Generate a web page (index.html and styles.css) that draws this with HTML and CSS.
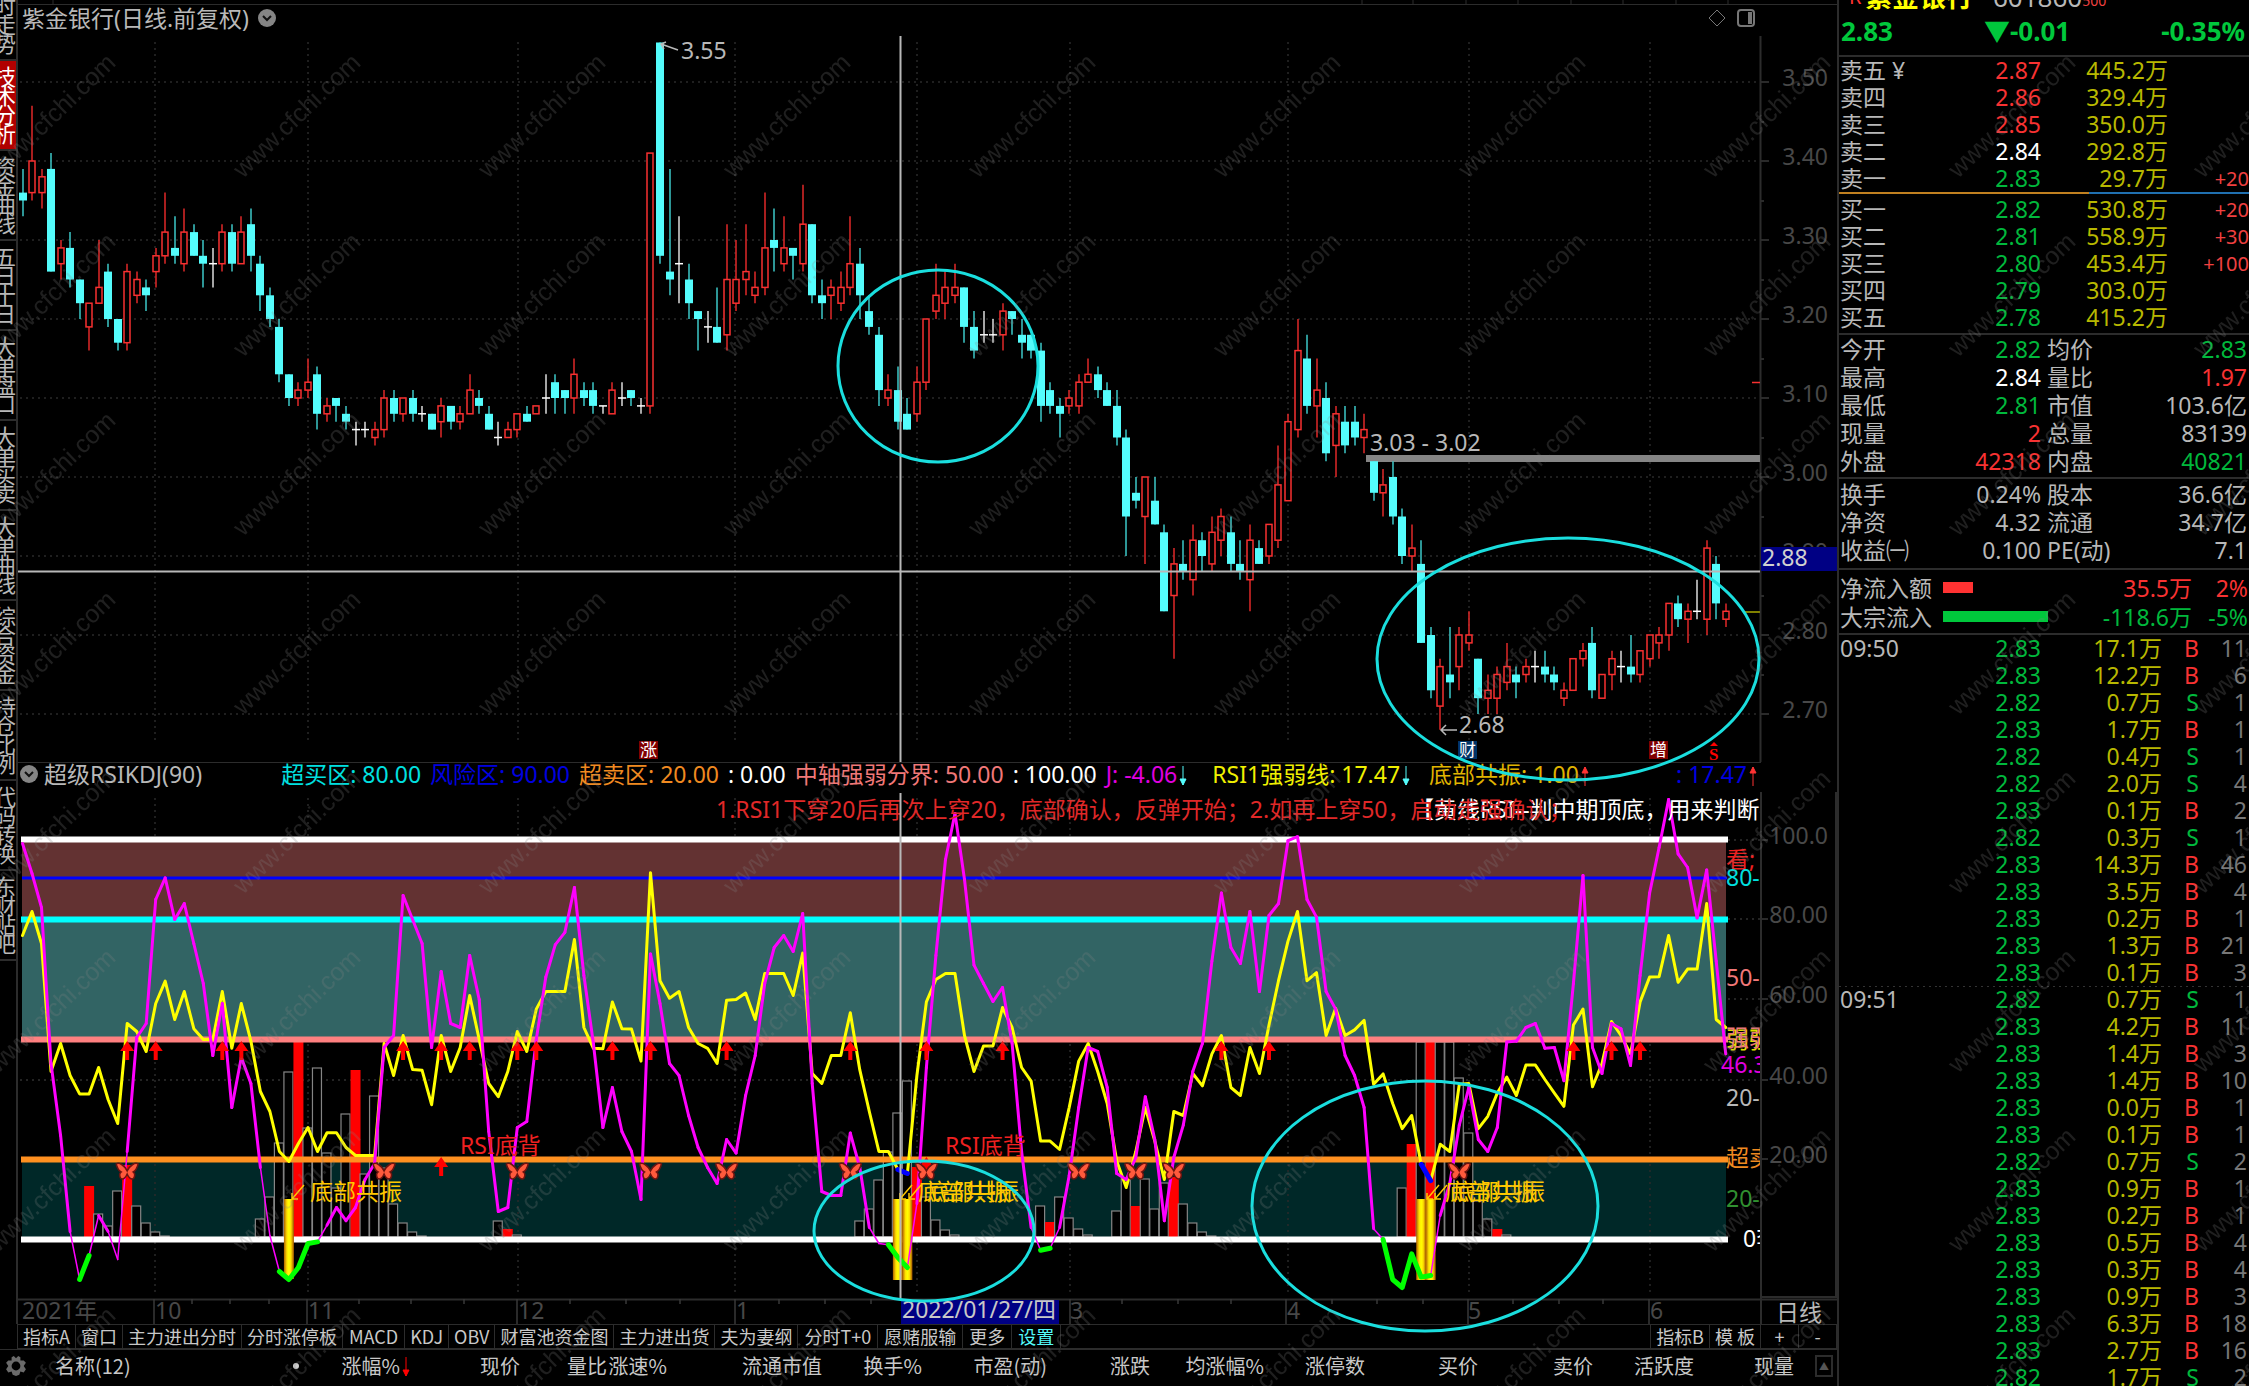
FILE: index.html
```html
<!DOCTYPE html>
<html lang="zh-CN">
<head>
<meta charset="utf-8">
<title>紫金银行 日线</title>
<link rel="stylesheet" href="styles.css">
</head>
<body>
<div class="app">
  <div class="left">
    <div class="workspace">
      <nav class="side" aria-label="视图">
        <button>分时走势</button><button class="active">技术分析</button><button>资金曲线</button><button>五日十日</button><button>大单盘口</button><button>大单买卖</button><button>大单曲线</button><button>综合资金</button><button>持仓比例</button><button>代码转换</button><button>东财贴吧</button>
      </nav>
      <main class="charts">
        <header class="price-head">
          <h1>紫金银行(日线.前复权)</h1>
          <svg class="chev" viewBox="0 0 18 18"><circle cx="9" cy="9" r="9"/><path d="M5 7l4 4 4-4"/></svg>
          <span class="spacer"></span>
          <svg class="tool" viewBox="0 0 18 18"><path d="M9 1l8 8-8 8-8-8z"/></svg>
          <svg class="tool" viewBox="0 0 18 18"><rect x="1" y="1" width="16" height="16" rx="3"/><path class="fill" d="M11 3h4v12h-4z"/></svg>
        </header>
        <svg id="price" class="plot" viewBox="18 36 1819 726"></svg>
        <header class="ind-head">
          <svg class="chev" viewBox="0 0 18 18"><circle cx="9" cy="9" r="9"/><path d="M5 7l4 4 4-4"/></svg>
          <h2>超级RSIKDJ(90)</h2>
          <span class="c-cyan">超买区: 80.00</span>
          <span class="c-blue">风险区: 90.00</span>
          <span class="c-orange">超卖区: 20.00</span>
          <span class="c-white">: 0.00</span>
          <span class="c-pink">中轴强弱分界: 50.00</span>
          <span class="c-white">: 100.00</span>
          <span class="c-mag">J: -4.06<svg class="arr down" viewBox="0 0 8 20"><path d="M4 0v19M1 13l3 6 3-6z"/></svg></span>
          <span class="c-yellow">RSI1强弱线: 17.47<svg class="arr down" viewBox="0 0 8 20"><path d="M4 0v19M1 13l3 6 3-6z"/></svg></span>
          <span class="c-gold">底部共振: 1.00<svg class="arr up" viewBox="0 0 8 20"><path d="M4 20V1M1 7l3-6 3 6z"/></svg></span>
          <span class="c-blue last">: 17.47<svg class="arr up" viewBox="0 0 8 20"><path d="M4 20V1M1 7l3-6 3 6z"/></svg></span>
        </header>
        <svg id="ind" class="plot" viewBox="18 792 1819 532"></svg>
      </main>
    </div>
    <nav class="tabs" aria-label="指标">
      <button>指标A</button><button>窗口</button><button>主力进出分时</button><button>分时涨停板</button><button class="wide">MACD</button><button>KDJ</button><button>OBV</button><button>财富池资金图</button><button>主力进出货</button><button>夫为妻纲</button><button class="wide">分时T+0</button><button class="wide">愿赌服输</button><button class="wide">更多</button><button class="wide on">设置</button>
      <span class="spacer"></span>
      <button class="first">指标B</button><button>模 板</button><button class="sq">+</button><button class="sq">-</button>
    </nav>
    <div class="cols">
      <svg class="gear" viewBox="0 0 20 20"><path d="M10 3l2-2 2 1 0 3 3 0 2 2-2 3 2 3-2 3-3-1-1 3-3 1-3-1-1-3-3 1-2-3 2-3-2-3 2-2 3 0 0-3 2-1z"/><circle cx="10" cy="10" r="4"/></svg>
      <span class="name">名称(12)<i></i></span><span>涨幅%<svg class="arr sort" viewBox="0 0 8 20"><path d="M4 0v19M1 13l3 6 3-6z"/></svg></span><span>现价</span><span>量比</span><span>涨速%</span><span>流通市值</span><span>换手%</span><span>市盈(动)</span><span>涨跌</span><span>均涨幅%</span><span>涨停数</span><span>买价</span><span>卖价</span><span>活跃度</span><span>现量</span><button aria-label="向上">▲</button>
    </div>
    <svg class="notes" viewBox="0 0 1837 1386">
      <g class="ring"><ellipse cx="938" cy="366" rx="100" ry="96"/><ellipse cx="1568" cy="659" rx="191" ry="121"/><ellipse cx="924" cy="1231" rx="110" ry="70"/><ellipse cx="1425" cy="1206" rx="173" ry="125"/></g>
      <path class="rule" d="M1362 0v4M1413 0v4M1466 0v4M1518 0v4M1571 0v4M1623 0v4M1676 0v4M1728 0v4M53 0v4"/>
    </svg>
  </div>
  <aside class="quote">
    <div class="title"><span class="r">R</span><b>紫金银行</b><span>601860</span><small>500</small></div>
    <div class="last-price"><span>2.83</span><span>▼-0.01</span><span>-0.35%</span></div>
    <table class="book sell"><tbody>
      <tr><th>卖五<em>¥</em></th><td class="up">2.87</td><td class="vol">445.2万</td><td></td></tr>
      <tr><th>卖四</th><td class="up">2.86</td><td class="vol">329.4万</td><td></td></tr>
      <tr><th>卖三</th><td class="up">2.85</td><td class="vol">350.0万</td><td></td></tr>
      <tr><th>卖二</th><td class="flat">2.84</td><td class="vol">292.8万</td><td></td></tr>
      <tr><th>卖一</th><td class="dn">2.83</td><td class="vol">29.7万</td><td class="chg">+20</td></tr>
    </tbody></table>
    <table class="book buy"><tbody>
      <tr><th>买一</th><td class="dn">2.82</td><td class="vol">530.8万</td><td class="chg">+20</td></tr>
      <tr><th>买二</th><td class="dn">2.81</td><td class="vol">558.9万</td><td class="chg">+30</td></tr>
      <tr><th>买三</th><td class="dn">2.80</td><td class="vol">453.4万</td><td class="chg">+100</td></tr>
      <tr><th>买四</th><td class="dn">2.79</td><td class="vol">303.0万</td><td></td></tr>
      <tr><th>买五</th><td class="dn">2.78</td><td class="vol">415.2万</td><td></td></tr>
    </tbody></table>
    <table class="stats"><tbody>
      <tr><th>今开</th><td class="dn">2.82</td><th>均价</th><td class="dn">2.83</td></tr>
      <tr><th>最高</th><td class="flat">2.84</td><th>量比</th><td class="up">1.97</td></tr>
      <tr><th>最低</th><td class="dn">2.81</td><th>市值</th><td>103.6亿</td></tr>
      <tr><th>现量</th><td class="up">2</td><th>总量</th><td>83139</td></tr>
      <tr><th>外盘</th><td class="up">42318</td><th>内盘</th><td class="dn">40821</td></tr>
    </tbody></table>
    <table class="stats base"><tbody>
      <tr><th>换手</th><td>0.24%</td><th>股本</th><td>36.6亿</td></tr>
      <tr><th>净资</th><td>4.32</td><th>流通</th><td>34.7亿</td></tr>
      <tr><th>收益㈠</th><td>0.100</td><th>PE(动)</th><td>7.1</td></tr>
    </tbody></table>
    <div class="flow">
      <div class="up"><span class="k">净流入额</span><span class="bar in"></span><span class="amt">35.5万</span><span class="pct">2%</span></div>
      <div class="dn"><span class="k">大宗流入</span><span class="bar out"></span><span class="amt">-118.6万</span><span class="pct">-5%</span></div>
    </div>
    <table class="ticks"><tbody id="ticks"></tbody></table>
  </aside>
  <svg class="mark"><defs><pattern id="wm" x="221" y="23" width="245" height="179" patternUnits="userSpaceOnUse"><text x="22" y="156" transform="rotate(-44 22 156)">www.cfchi.com</text></pattern></defs><rect width="100%" height="100%" fill="url(#wm)"/></svg>
</div>
<script src="chart.js"></script>
</body>
</html>
```

FILE: styles.css
```css
* { box-sizing: border-box; }
body { margin: 0; background: #000; color: #b8b8b8; font: 23px/28px "Noto Sans", "Noto Sans CJK SC", sans-serif; }
button { font: inherit; color: inherit; background: none; border: 0; margin: 0; padding: 0; white-space: nowrap; }
h1, h2 { font: inherit; margin: 0; }
.spacer { flex: 1; }

.app { display: flex; height: 100vh; overflow: hidden; position: relative; }
.left { flex: 1; min-width: 0; position: relative; }
.workspace { display: flex; align-items: flex-start; }

.side { width: 18px; flex: none; align-self: stretch; border-right: 2px solid #2c2c2c; overflow: hidden; margin-top: -29px; }
.side button { display: block; width: 16px; height: 90px; padding: 6px 0; border-bottom: 2px solid #2c2c2c; white-space: normal; overflow: hidden; font-size: 22px; line-height: 19px; word-break: break-all; direction: rtl; }
.side .active { background: #b00000; color: #fff; }

.charts { flex: 1; min-width: 0; }
.plot { display: block; width: 100%; height: auto; overflow: hidden; }
.price-head { display: flex; align-items: center; gap: 9px; height: 32px; margin-top: 4px; padding: 0 82px 5px 4px; border-top: 1px solid #2c2c2c; }
.chev { width: 18px; height: 18px; flex: none; }
.chev circle { fill: #858585; }
.chev path { fill: none; stroke: #111; stroke-width: 2; }
.tool { width: 18px; height: 18px; fill: none; stroke: #777; stroke-width: 1; margin-left: 2px; }
.tool rect { stroke-width: 2; }
.tool .fill { fill: #777; stroke: none; }

.ind-head { display: flex; align-items: center; height: 30px; padding: 0 0 8px 2px; gap: 9px; border-top: 1px solid #2c2c2c; white-space: nowrap; overflow: hidden; margin-right: 76px; }
.ind-head h2 { margin: 0 70px 0 -3px; }
.ind-head span { flex: none; }
.ind-head .last { margin-left: auto; margin-right: 4px; }
.ind-head .c-yellow { margin-left: 16px; }
.ind-head .c-gold { margin-left: 10px; }
.arr { width: 8px; height: 20px; vertical-align: -3px; margin-left: 2px; stroke: currentColor; fill: currentColor; stroke-width: 1; }
.down { color: #54fcfc; }
.up.arr { color: #ff3232; }
.c-cyan { color: #00e0e0; }
.c-blue { color: #0000e0; }
.c-orange { color: #f08a20; }
.c-white { color: #fff; }
.c-pink { color: #f07878; }
.c-mag { color: #e000e0; }
.c-yellow { color: #f0f000; }
.c-gold { color: #e0b400; }

.tabs { display: flex; height: 25px; margin-left: 17px; border: solid #2c2c2c; border-width: 1px 0 1px 1px; font-size: 18px; line-height: 20px; color: #c8c8c8; font-family: "Noto Sans CJK SC", sans-serif; }
.tabs button { padding: 0 5px 2px; border-right: 1px solid #2c2c2c; }
.tabs .wide { padding: 0 6px 2px; }
.tabs .on { color: #54fcfc; }
.tabs .first { border-left: 1px solid #2c2c2c; }
.tabs .sq { width: 38px; }

.cols { display: grid; grid-template-columns: 35fr 265fr 110fr 110fr 87fr 60fr 155fr 100fr 125fr 103fr 114fr 101fr 113fr 115fr 101fr 100fr 43fr; align-items: center; height: 32px; border-top: 1px solid #2c2c2c; font: 20px/30px "Noto Sans CJK SC", sans-serif; color: #c8c8c8; text-align: right; white-space: nowrap; }
.cols .name { display: flex; align-items: center; justify-content: space-between; padding: 0 1px 0 20px; }
.cols i { width: 6px; height: 6px; border-radius: 3px; background: #ccc; }
.cols button { width: 18px; height: 22px; margin-left: 21px; border: 2px solid #2c2c2c; font-size: 10px; line-height: 16px; color: #555; }
.gear { width: 22px; height: 22px; margin-left: 5px; fill: #6a6a6a; }
.gear circle { fill: #000; }
.sort { color: #f00; }

.notes { position: absolute; left: 0; top: 0; width: 100%; height: auto; pointer-events: none; overflow: hidden; }
.ring { fill: none; stroke: #1adede; stroke-width: 3; }
.rule { stroke: #2c2c2c; stroke-width: 1; }

.quote { width: 412px; flex: none; border-left: 2px solid #2c2c2c; overflow: hidden; }
.title { display: flex; align-items: flex-end; height: 12px; padding-left: 10px; font-size: 26px; line-height: 30px; white-space: nowrap; }
.title .r { color: #ff3232; width: 16px; overflow: hidden; font-size: 20px; }
.title b { color: #ff0; margin-right: 20px; font-size: 27px; }
.title small { color: #f04040; font-size: 14px; line-height: 22px; }
.last-price { display: flex; justify-content: space-between; height: 45px; padding: 1px 4px 0 2px; font-weight: 700; font-size: 26px; line-height: 36px; color: #00c83c; border-bottom: 2px solid #2c2c2c; }
table { width: 100%; border-collapse: separate; border-spacing: 0; table-layout: fixed; }
th { font-weight: 400; text-align: left; padding: 0 0 0 1px; white-space: nowrap; }
td { text-align: right; padding: 0; white-space: nowrap; }
.up { color: #f83232; }
.dn { color: #00b83c; }
.flat { color: #fff; }
.vol { color: #b8b800; }
em { font-style: normal; margin-left: 6px; }
.book tr, .ticks tr { height: 27px; line-height: 27px; }
.book th { width: 120px; }
.book td:nth-child(2) { width: 82px; }
.book td:nth-child(3) { width: 127px; }
.book .chg { font-size: 20px; color: #f04040; }
.sell { border-bottom: 2px solid; border-image: linear-gradient(90deg, #c08020 61%, #2070b0 61%) 1; }
.buy { padding: 2px 0; border-bottom: 2px solid #2c2c2c; }
.stats { border-bottom: 2px solid #2c2c2c; padding: 0 2px 2px 0; }
.stats.base { padding: 1px 2px 4px 0; }
.stats tr { height: 28px; line-height: 28px; }
.stats th:first-child { width: 100px; }
.stats td:nth-child(2) { width: 102px; }
.stats th:nth-child(3) { width: 88px; padding-left: 6px; }
.flow { border-bottom: 2px solid #2c2c2c; padding: 3px 0 2px; }
.flow div { display: flex; align-items: center; height: 29px; }
.k { color: #b8b8b8; width: 100px; padding-left: 1px; margin-right: 4px; white-space: nowrap; flex: none; }
.bar { height: 11px; }
.in { width: 30px; background: #ff3232; }
.out { width: 105px; background: #00c83c; }
.amt { margin-left: auto; }
.pct { width: 57px; text-align: right; padding-right: 1px; }
.ticks th { width: 100px; padding-left: 1px; }
.ticks td:nth-child(2) { width: 102px; }
.ticks td:nth-child(3) { width: 121px; }
.ticks td:nth-child(4) { width: 37px; }
.ticks td:nth-child(5) { color: #777; padding-right: 2px; }
.ticks .minute > * { background: repeating-linear-gradient(90deg, #333 0 2px, transparent 2px 6px) top / 100% 1px no-repeat; }

.mark { position: absolute; inset: 0; width: 100%; height: 100%; pointer-events: none; }
.mark text { font: 25px "Liberation Sans", sans-serif; fill: #808080; fill-opacity: .24; }

.plot text { font: 23px "Noto Sans", "Noto Sans CJK SC", sans-serif; fill: #b8b8b8; white-space: pre; }
.plot .axis { fill: #484848; }
.plot .end { text-anchor: end; }
.plot .gold { fill: #ffc800; }
.plot .red { fill: #f02020; }
.plot .badge { font-size: 17px; fill: #fff; }
```

FILE: chart.js
```javascript
const X0 = 22.5, STEP = 9.515;
const x = i => X0 + STEP * i;
const el = id => document.getElementById(id);
const line = (x1, y1, x2, y2, c, w = 1, extra = '') => `<path d="M${x1} ${y1}L${x2} ${y2}" fill="none" stroke="${c}" stroke-width="${w}" ${extra}/>`;
const rect = (a, b, w, h, f, extra = '') => `<rect x="${a}" y="${b}" width="${w}" height="${h}" fill="${f}" ${extra}/>`;
const text = (a, b, s, cls = '', fill = '') => `<text x="${a}" y="${b}" class="${cls}" ${fill ? `style="fill:${fill}"` : ''}>${s}</text>`;
const DOT = 'stroke-dasharray="2 4"';
const months = [155, 308, 518, 735, 917, 1070, 1288, 1469, 1650];

// One candle per day: type (c falling, r rising, w unchanged), then high, body top, body bottom, low in cents below 3.50.
const candles = `c11 14 15 17,r3 10 14 15,r11 12 14 16,c9 11 24 24,r20 21 23 25,c19 21 25 26,c25 25 28 30,r28 28 31 34,r20 26 28 28,c23 24 30 31,c30 30 33 34,r23 24 33 34,r24 25 27 28,c25 26 27 29,r21 22 24 26,r14 19 22 23,c17 21 22 23,r16 19 23 24,c18 19 22 22,c20 22 23 26,w21 23 23 26,r18 19 23 24,c18 19 23 24,r17 19 23 23,c16 18 22 24,c22 23 27 29,c26 27 30 31,c30 31 37 38,c37 37 40 41,r38 39 40 41,r35 38 39 40,c36 37 42 44,r40 41 42 43,c40 40 41 43,c41 42 43 44,w43 44 44 46,w43 44 44 45,r43 44 45 46,r39 40 44 45,c39 40 42 43,r40 40 42 43,c39 40 42 43,w41 42 42 43,c42 42 44 44,r40 41 43 45,c41 41 43 44,r41 42 43 44,r37 39 42 42,c39 40 41 42,c41 42 44 44,w43 45 45 46,r43 44 45 45,r42 42 44 45,c41 42 43 43,r41 41 42 42,w37 40 40 42,c37 38 40 42,c39 39 40 42,r35 37 40 42,c38 39 40 41,c38 39 41 42,w41 41 41 42,r38 39 42 42,w38 40 40 41,c39 39 40 41,w40 41 41 42,r9 9 41 42,c-5 -5 22 23,c11 24 25 27,w17 23 23 28,c23 25 28 30,c29 29 30 34,w29 31 31 33,c26 31 33 33,r18 25 32 34,r20 25 28 29,r18 24 25 27,r24 26 27 28,r14 21 26 27,c16 20 21 24,r17 21 23 24,c21 21 22 25,r13 18 23 24,c18 18 27 28,c25 27 28 30,r25 26 27 30,r24 26 28 29,r17 23 26 27,c21 23 27 30,c27 29 31 32,c31 32 39 41,r37 39 40 41,c36 39 43 44,c40 42 44 44,r36 38 42 43,r30 30 38 39,r23 27 29 30,r24 26 28 30,r23 26 27 28,c26 26 31 33,c29 31 34 35,w29 32 32 33,w30 32 32 33,r28 29 32 34,c29 29 30 32,c30 32 33 35,c32 32 34 35,c33 34 41 43,c38 39 41 42,c40 41 42 45,r39 40 41 42,r37 38 41 42,r35 37 38 38,c36 37 39 40,c38 39 41 41,c39 41 45 46,c44 45 55 60,c50 52 53 54,r50 50 55 61,c50 53 56 56,c56 57 67 67,r59 61 65 73,c58 61 62 63,r56 58 63 65,c57 58 60 62,r55 57 61 62,r54 55 58 60,c55 57 61 62,c58 61 62 63,r56 58 63 67,c58 59 61 61,r56 56 60 61,r46 51 58 59,r42 43 53 53,r30 34 44 45,c32 35 41 42,r35 39 41 45,c38 40 47 48,r41 42 46 50,c41 43 46 47,c41 43 45 46,r42 44 45 47,c48 48 52 53,r49 51 52 55,c48 50 55 56,c54 55 60 61,r56 59 60 62,c58 61 71 71,c69 70 77 78,r73 74 79 82,c69 75 76 78,r69 70 74 77,r67 70 71 72,c73 73 78 80,r75 77 78 80,r74 75 78 80,r71 74 76 77,c74 75 76 78,r73 74 75 76,w72 74 74 76,c72 74 75 76,c74 75 76 77,r76 77 78 79,r73 73 77 77,r71 72 73 74,c69 71 77 78,r75 75 78 78,r72 73 75 77,w72 74 74 76,c70 74 75 76,r72 72 75 76,r70 70 73 74,r69 70 71 73,r66 66 70 72,c65 66 68 69,r66 67 68 71,w63 67 67 68,r58 59 68 70,c60 61 66 68,r66 67 68 69`.split(',');
const py = n => 82 + n * 7.9;

let s = '';
for (let k = 0; k < 9; k++) {
  const y = Math.round(py(k * 10));
  s += line(20, y, 1760, y, '#2a2a2a', 1.5, DOT) + line(1760, y, 1769, y, '#383838', 1.5);
  if (k < 8) s += line(1760, y + 40, 1764, y + 40, '#383838', 1.5);
  s += text(1828, y + 4, (3.5 - k / 10).toFixed(2), 'axis end');
}
months.forEach(m => s += line(m, 42, m, 740, '#2a2a2a', 1.5, DOT));
s += line(1760.5, 36, 1760.5, 762, '#2c2c2c', 2);
s += rect(1366, 455, 394, 7, '#858585') + text(1370, 451, '3.03 - 3.02');
candles.forEach((c, i) => {
  const [h, t, b, l] = c.slice(1).split(' ').map(v => py(+v));
  const cx = Math.round(x(i)), type = c[0];
  if (type === 'c') s += line(cx, h, cx, l, '#3cc8c8', 1.5) + rect(cx - 4, t, 8, Math.max(b - t, 7), '#54fcfc');
  else if (type === 'r') s += line(cx, h, cx, t, '#e02828', 1.5) + line(cx, b, cx, l, '#e02828', 1.5) + rect(cx - 3, t, 6, b - t, '#000', 'stroke="#f83030" stroke-width="1.5"');
  else s += line(cx, h, cx, l, '#ddd', 1.5) + line(cx - 4, t, cx + 4, t, '#fff', 1.5);
});
s += line(900.5, 36, 900.5, 762, '#b8b8b8', 2) + line(18, 571.5, 1760, 571.5, '#b8b8b8', 2);
s += text(681, 59, '3.55') + '<path d="M678 50L661 44M666 42l-5 2 3 5" fill="none" stroke="#b8b8b8" stroke-width="1.5"/>';
s += text(1459, 733, '2.68') + '<path d="M1457 730h-16M1446 725l-5 5 5 5" fill="none" stroke="#b8b8b8" stroke-width="1.5"/>';
s += line(1752, 382.5, 1760, 382.5, '#f83030', 1.5) + line(1743, 612, 1760, 612, '#808000', 2);
s += rect(1761, 547, 76, 24, '#000084') + text(1762, 566, '2.88', '', '#d0d0d0');
[[639, '#800000', '涨'], [1458, '#003366', '财'], [1649, '#800000', '增']].forEach(([a, f, t]) => s += rect(a, 741, 19, 18, f) + text(a + 1, 756, t, 'badge'));
s += `<path d="M1710 746l4-4 4 4z" fill="red"/><text x="1709" y="760" style="font:700 17px 'Liberation Serif',serif;fill:red">S</text>`;
el('price').innerHTML = s;

const vy = v => 1239.5 - 4 * v;
const J = [99,91.5,83,44,26,2,-10,-4,6,2,-5,22,50.5,54,85,90.4,80,84,74,64,46,59,33,45.5,39,18,1,-8,-10,-7,-1,-.6,3.6,8,4.7,8,15,19,48,51,86,80,74,48,67,54,53,71,60,27,7,8,28,29.5,50,65.6,73.7,76.8,88,66,49,28,38,27,22,10,71.4,59,44,41,31,23,18,14,25,21.6,36,46,64,73,76,72,81.5,39,12,11,11,26.6,18,3,-1,-1.3,-4.5,-7,9,43,71,95,106.5,90,68.6,64,59.5,63,49,22,3,-2.7,-2.2,3,16,33,48,47,38,16.5,15,20.5,35.7,25,4.7,20.5,28.6,42,49,69.6,86.6,73,69,82,62,81,84,99.7,100.7,85,80.6,62,57.6,46,41,33,2.7,0,-10,-12,-3.6,-9.4,-9,6,14,28.6,38,25,22,28,49.4,49.6,53,54,47.8,48,39.7,64,91,48,41.5,54,52.7,43.5,66,86.6,98,110,96.4,93,80.4,92.4,69.6,46.4];
const R = [76,82,74,42,49,41,36.4,36.4,43,35,29,54,52,47,59,64.6,55,62,52.7,50,50,62,47.8,59,49.6,37,32,22,19.5,24,28,22,26.7,26.7,23,21,21,21,49,41,51,42.5,42.3,33.7,51,42,48,61,50,39,35.7,42,52,47,57.6,62,62,62,75,53,47.8,47.7,59.4,52.7,52.6,44.6,91.7,64.7,60.3,62,53,49,47.8,44,59.8,60,61.6,55,66.5,66.5,66.5,61,71.6,41.5,39,46,46,56.7,42.4,32,22,22,17.5,16.5,41,59.4,65,66.5,66.5,51,42,48.4,48.4,58,53,43,39.6,24.6,24.6,22.5,33,44.6,49,42,34,19.6,13,22,33,24.6,15,32,31,41.5,38.4,46.4,51,38,36,48,41.5,53.6,64.7,74.6,82,64.7,66.7,51,57.8,51,52.4,54.8,38.8,41.4,34,27.7,31,18.8,14.7,23.8,22,38.8,39,27.7,30.8,36.6,40.6,36,43.6,43.6,40,36.6,33.3,53.6,57.6,38.2,44,54.5,51,46.4,59.4,65.6,65.7,76,64.3,67.6,67.6,84,55,53];
// Histogram above the zero line: index, height, 'r' when the bar is filled red.
const bars = '7 51r,8 23,9 11,10 46,11 72r,12 31,13 14,14 5,15 1,25 18,26 40,27 94,28 165,29 195r,30 109,31 169,32 84,33 49,34 123,35 167r,36 63,37 141,38 69,39 33,40 14,41 5,42 1,50 16,51 8r,52 2,88 16,89 28,90 57,91 85,92 124,93 156,94 70r,95 40,96 17,97 7,98 2,107 31,108 15r,109 40,110 19,111 8,112 2,115 26,116 58,117 31r,118 58,119 28,120 54,121 60r,122 33,123 14,124 5,125 1,145 49,146 93r,147 195,148 195r,149 195,150 195,151 159,152 104,153 36,154 18,155 8r,156 2'.split(',');

s = '<defs><clipPath id="c"><path d="M18 792h1742v532h-1742z"/></clipPath><linearGradient id="g"><stop offset="0" stop-color="#b06000"/><stop offset=".3" stop-color="#ffe000"/><stop offset=".5" stop-color="#ff0"/><stop offset=".7" stop-color="#ffe000"/><stop offset="1" stop-color="#a05000"/></linearGradient></defs>';
s += rect(22, 840, 1704, 79, '#633232') + rect(22, 919, 1704, 120, '#326464') + rect(22, 1159, 1704, 81, '#002828');
months.forEach(m => s += line(m, 798, m, 838, '#2a2a2a', 1.5, DOT) + line(m, 1044, m, 1296, '#2a2a2a', 1.5, DOT));
[840, 919, 999, 1080, 1159].forEach((y, k) => s += line(y === 1080 ? 20 : 1728, y, 1762, y, '#303030', 1.5, DOT) + text(1828, y + 4, ['100.0', '80.00', '60.00', '40.00', '20.00'][k], 'axis end') + line(1762, y, 1768, y, '#383838', 1.5));
s += '<g clip-path="url(#c)">';
bars.forEach(b => {
  const red = b.endsWith('r'), [i, h] = b.replace('r', '').split(' ').map(Number);
  s += red ? rect(x(i) - 5, 1237 - h, 10, h, '#f00') : rect(x(i) - 5, 1237 - h, 9, h, '#000', 'stroke="#858585" stroke-width="1.2"');
});
const H = (v, c, w) => line(21, vy(v), 1728, vy(v), c, w);
s += H(100, '#fff', 6) + line(22, 878, 1727, 878, '#00f', 3) + H(80, '#0ff', 6) + H(50, '#ff8080', 6) + H(20, '#ff9020', 6) + H(0, '#fff', 6);
[28, 92, 93, 147, 148].forEach(i => s += rect(x(i) - 5, 1199, 10, i === 28 ? 80 : 81, 'url(#g)'));
const poly = (arr, a, b, c, w) => `<polyline fill="none" stroke="${c}" stroke-width="${w}" stroke-linejoin="round" stroke-linecap="round" points="${arr.slice(a, b + 1).map((v, k) => x(a + k).toFixed(1) + ',' + vy(v).toFixed(1)).join(' ')}"/>`;
s += poly(R, 0, 179, '#ff0', 3);
for (let i = 0; i < 179; i++) s += poly(J, i, i + 1, '#f0f', Math.min(J[i], J[i + 1]) < 2 ? 1.5 : 3);
[[6, 7], [27, 31], [91, 93], [107, 108], [143, 148]].forEach(([a, b]) => s += poly(J, a, b, '#0f0', 5));
s += poly(R, 92, 93, '#00f', 5) + poly(R, 147, 148, '#00f', 5);
const arrow = (cx, y) => `<path d="M${cx} ${y}l7 10h-5v9h-4v-9h-5z" fill="red"/>`;
[11, 14, 21, 23, 40, 44, 47, 52, 54, 62, 66, 74, 87, 95, 103, 126, 131, 163, 167, 170].forEach(i => s += arrow(x(i), 1041));
s += arrow(x(44), 1157) + arrow(x(95), 1157);
[11, 38, 52, 66, 74, 87, 95, 109, 117, 121, 151].forEach(i => s += `<path transform="translate(${x(i) + (i === 109 ? 19 : 0)} 1171)" d="M0 0C-3-6-8-9-11-7-10-3-8 0-6 1-9 3-7 8-5 8-2 8-1 5 0 3 1 5 2 8 5 8 7 8 9 3 6 1 8 0 10-3 11-7 8-9 3-6 0 0z" fill="#ff5a3c" stroke="#6a1410" stroke-width="1.5"/>`);
s += text(460, 1154, 'RSI底背', 'red') + text(945, 1154, 'RSI底背', 'red');
const res = a => text(a, 1200, '底部共振', 'gold') + `<path d="M${a - 6} 1185l-12 14m0-6v6h6" fill="none" stroke="#ffc800" stroke-width="1.5"/>`;
s += res(310) + res(918) + res(927) + res(1445) + res(1453);
s += text(1411, 818, '【黄线RSI--判中期顶底，用来判断-', '', '#fff');
s += text(716, 818, '1.RSI1下穿20后再次上穿20，底部确认，反弹开始；2.如再上穿50，启动走强确认；', '', '#e02828');
s += text(1726, 868, '看;', 'red') + text(1726, 886, '80-', '', '#00e0e0') + text(1726, 986, '50-', '', '#f07878') + text(1726, 1106, '20-') + text(1726, 1166, '超卖', '', '#f08a20') + text(1726, 1207, '20-', '', '#309030') + text(1743, 1247, '0李', '', '#fff') + text(1726, 1048, '弱强', '', '#e0e000') + text(1726, 1046, '强弱', '', '#f07878') + text(1721, 1073, '46.39', '', '#e000e0');
s += '</g>';
s += line(900.5, 793, 900.5, 1299, '#b8b8b8', 2);
s += '<path d="M1761 792v507M1762 1297h74V792M18 1299.500h1819M1761 1299v25" fill="none" stroke="#2c2c2c" stroke-width="2"/>';
[154, 307, 517, 735, 1286, 1468, 1649, 1070].forEach(m => s += line(m, 1299, m, 1324, '#383838', 1.5));
[192, 230, 269, 359, 411, 464, 570, 626, 680, 779, 825, 871, 1122, 1178, 1231, 1332, 1377, 1423, 1513, 1559, 1603].forEach(m => s += line(m, 1299, m, 1304, '#383838', 1.5));
[[22, '2021年'], [155, '10'], [308, '11'], [518, '12'], [736, '1'], [1070, '3'], [1287, '4'], [1468, '5'], [1650, '6']].forEach(([a, t]) => s += text(a, 1319, t, 'axis'));
s += rect(901, 1300, 158, 24, '#000084') + text(902, 1318, '2022/01/27/四', '', '#c8c8c8') + text(1776, 1321, '日线');
el('ind').innerHTML = s;

const ticks = '3 17.1 B 11,3 12.2 B 6,2 0.7 S 1,3 1.7 B 1,2 0.4 S 1,2 2.0 S 4,3 0.1 B 2,2 0.3 S 1,3 14.3 B 46,3 3.5 B 4,3 0.2 B 1,3 1.3 B 21,3 0.1 B 3,2 0.7 S 1,3 4.2 B 11,3 1.4 B 3,3 1.4 B 10,3 0.0 B 1,3 0.1 B 1,2 0.7 S 2,3 0.9 B 1,3 0.2 B 1,3 0.5 B 4,3 0.3 B 4,3 0.9 B 3,3 6.3 B 18,3 2.7 B 16,2 1.7 S 2';
el('ticks').innerHTML = ticks.split(',').map((r, i) => {
  const [p, v, d, n] = r.split(' ');
  return `<tr${i === 13 ? ' class="minute"' : ''}><th>${i === 0 ? '09:50' : i === 13 ? '09:51' : ''}</th><td class="dn">2.8${p}</td><td class="vol">${v}万</td><td class="${d === 'B' ? 'up' : 'dn'}">${d}</td><td>${n}</td></tr>`;
}).join('');
```
